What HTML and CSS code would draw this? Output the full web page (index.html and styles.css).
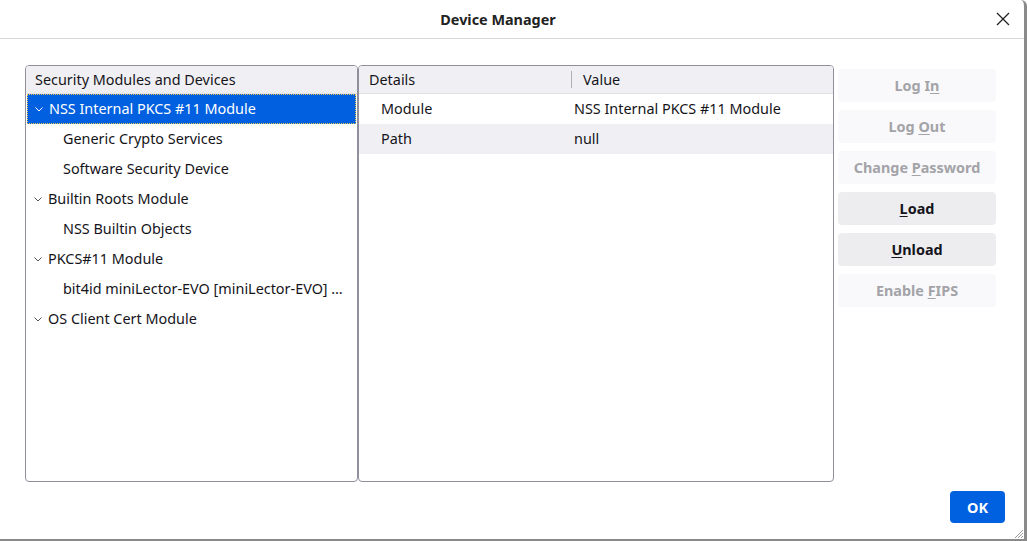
FILE: index.html
```html
<!DOCTYPE html>
<html>
<head>
<meta charset="utf-8">
<title>Device Manager</title>
<link rel="stylesheet" href="styles.css">
</head>
<body>
<div class="window">
  <div class="titlebar">
    <span class="title">Device Manager</span>
    <svg class="close" width="14" height="14" viewBox="0 0 14 14"><path d="M1 1L13 13M13 1L1 13" stroke="#222" stroke-width="1.3" fill="none"/></svg>
  </div>
  <div class="content">
    <div class="main">
      <div class="panel tree">
        <div class="phead"><span class="hcell">Security Modules and Devices</span></div>
        <div class="row parent selected"><span class="chev"><svg width="8" height="5" viewBox="0 0 8 5"><path d="M0.5 0.5L4 4L7.5 0.5" stroke="currentColor" fill="none" stroke-width="1"/></svg></span>NSS Internal PKCS #11 Module</div>
        <div class="row child">Generic Crypto Services</div>
        <div class="row child">Software Security Device</div>
        <div class="row parent"><span class="chev"><svg width="8" height="5" viewBox="0 0 8 5"><path d="M0.5 0.5L4 4L7.5 0.5" stroke="currentColor" fill="none" stroke-width="1"/></svg></span>Builtin Roots Module</div>
        <div class="row child">NSS Builtin Objects</div>
        <div class="row parent"><span class="chev"><svg width="8" height="5" viewBox="0 0 8 5"><path d="M0.5 0.5L4 4L7.5 0.5" stroke="currentColor" fill="none" stroke-width="1"/></svg></span>PKCS#11 Module</div>
        <div class="row child">bit4id miniLector-EVO [miniLector-EVO] …</div>
        <div class="row parent"><span class="chev"><svg width="8" height="5" viewBox="0 0 8 5"><path d="M0.5 0.5L4 4L7.5 0.5" stroke="currentColor" fill="none" stroke-width="1"/></svg></span>OS Client Cert Module</div>
      </div>
      <div class="panel details">
        <div class="phead">
          <span class="hcol1">Details</span>
          <span class="hsep"></span>
          <span class="hcol2">Value</span>
        </div>
        <div class="drow"><span class="dcol1">Module</span><span class="dcol2">NSS Internal PKCS #11 Module</span></div>
        <div class="drow alt"><span class="dcol1">Path</span><span class="dcol2">null</span></div>
      </div>
      <div class="buttons">
        <div class="btn disabled"><span>Log I<u>n</u></span></div>
        <div class="btn disabled"><span>Log <u>O</u>ut</span></div>
        <div class="btn disabled"><span>Change <u>P</u>assword</span></div>
        <div class="btn"><span><u>L</u>oad</span></div>
        <div class="btn"><span><u>U</u>nload</span></div>
        <div class="btn disabled"><span>Enable <u>F</u>IPS</span></div>
      </div>
    </div>
    <div class="footer">
      <div class="ok">OK</div>
    </div>
  </div>
  <svg class="grip" width="12" height="12" viewBox="0 0 12 12"><path d="M11 3L3 11M11 6L6 11M11 9L9 11" stroke="#999" stroke-width="1" fill="none"/></svg>
</div>
</body>
</html>
```

FILE: styles.css
```css
html, body {
  margin: 0;
  padding: 0;
  background: #ffffff;
}
body {
  width: 1027px;
  height: 541px;
  overflow: hidden;
  font-family: "Noto Sans", "DejaVu Sans", sans-serif;
  font-size: 14.4px;
  color: #15141a;
}
.window {
  position: relative;
  width: 1024px;
  height: 539px;
  border-right: 3px solid #8a8a8a;
  border-bottom: 2px solid #8a8a8a;
  border-top-right-radius: 6px;
  background: #fff;
  display: flex;
  flex-direction: column;
}
.titlebar {
  height: 39px;
  border-bottom: 1px solid #d8d8d8;
  display: flex;
  align-items: center;
  justify-content: center;
  position: relative;
  box-sizing: border-box;
}
.title {
  font-weight: bold;
  font-size: 14.4px;
  color: #222;
  margin-right: 28px;
}
.close {
  position: absolute;
  right: 14px;
  top: 12px;
}
.content {
  flex: 1;
  display: flex;
  flex-direction: column;
  padding: 26px 19px 15px 25px;
}
.main {
  display: flex;
  height: 417px;
}
.panel {
  border: 1px solid #8f8f9d;
  border-radius: 4px;
  box-sizing: border-box;
  height: 417px;
  overflow: hidden;
}
.tree {
  width: 333px;
}
.details {
  width: 476px;
}
.phead {
  height: 28px;
  background: #f0f0f4;
  border-bottom: 1px solid #e0e0e6;
  display: flex;
  align-items: center;
  box-sizing: border-box;
}
.hcell {
  padding-left: 9px;
}
.row {
  height: 30px;
  display: flex;
  align-items: center;
  white-space: nowrap;
  box-sizing: border-box;
  padding-bottom: 1px;
}
.row.parent {
  padding-left: 8px;
}
.row.child {
  padding-left: 37px;
}
.chev {
  width: 14px;
  display: inline-flex;
  align-items: center;
  color: #555;
  padding-top: 1px;
}
.row.selected {
  background: #0060df;
  color: #fff;
  border: 1px dotted #e8c44a;
  margin: 0 1px;
  padding-left: 7px;
}
.row.selected .chev {
  color: #fff;
}
.hcol1 {
  width: 212px;
  padding-left: 10px;
  box-sizing: border-box;
}
.hsep {
  width: 1px;
  height: 17px;
  background: #b0b0b8;
}
.hcol2 {
  padding-left: 11px;
}
.drow {
  height: 30px;
  display: flex;
  align-items: center;
  padding-bottom: 1px;
  box-sizing: border-box;
}
.drow.alt {
  background: #f0f0f4;
}
.dcol1 {
  width: 215px;
  padding-left: 22px;
  box-sizing: border-box;
}
.buttons {
  display: flex;
  flex-direction: column;
  gap: 8px;
  margin-left: 4px;
  padding-top: 4px;
  width: 158px;
}
.btn {
  height: 33px;
  border-radius: 4px;
  background: #ededf0;
  font-weight: bold;
  display: flex;
  align-items: center;
  justify-content: center;
  color: #15141a;
  white-space: nowrap;
}
.btn.disabled {
  background: #f9f9fb;
  color: #a3a3a8;
}
.btn u {
  text-underline-offset: 2px;
}
.footer {
  display: flex;
  justify-content: flex-end;
  padding-top: 9px;
}
.ok {
  width: 55px;
  height: 32px;
  border-radius: 4px;
  background: #0061e0;
  color: #fff;
  font-weight: bold;
  display: flex;
  align-items: center;
  justify-content: center;
}
.grip {
  position: absolute;
  right: 0;
  bottom: 0;
}
```
